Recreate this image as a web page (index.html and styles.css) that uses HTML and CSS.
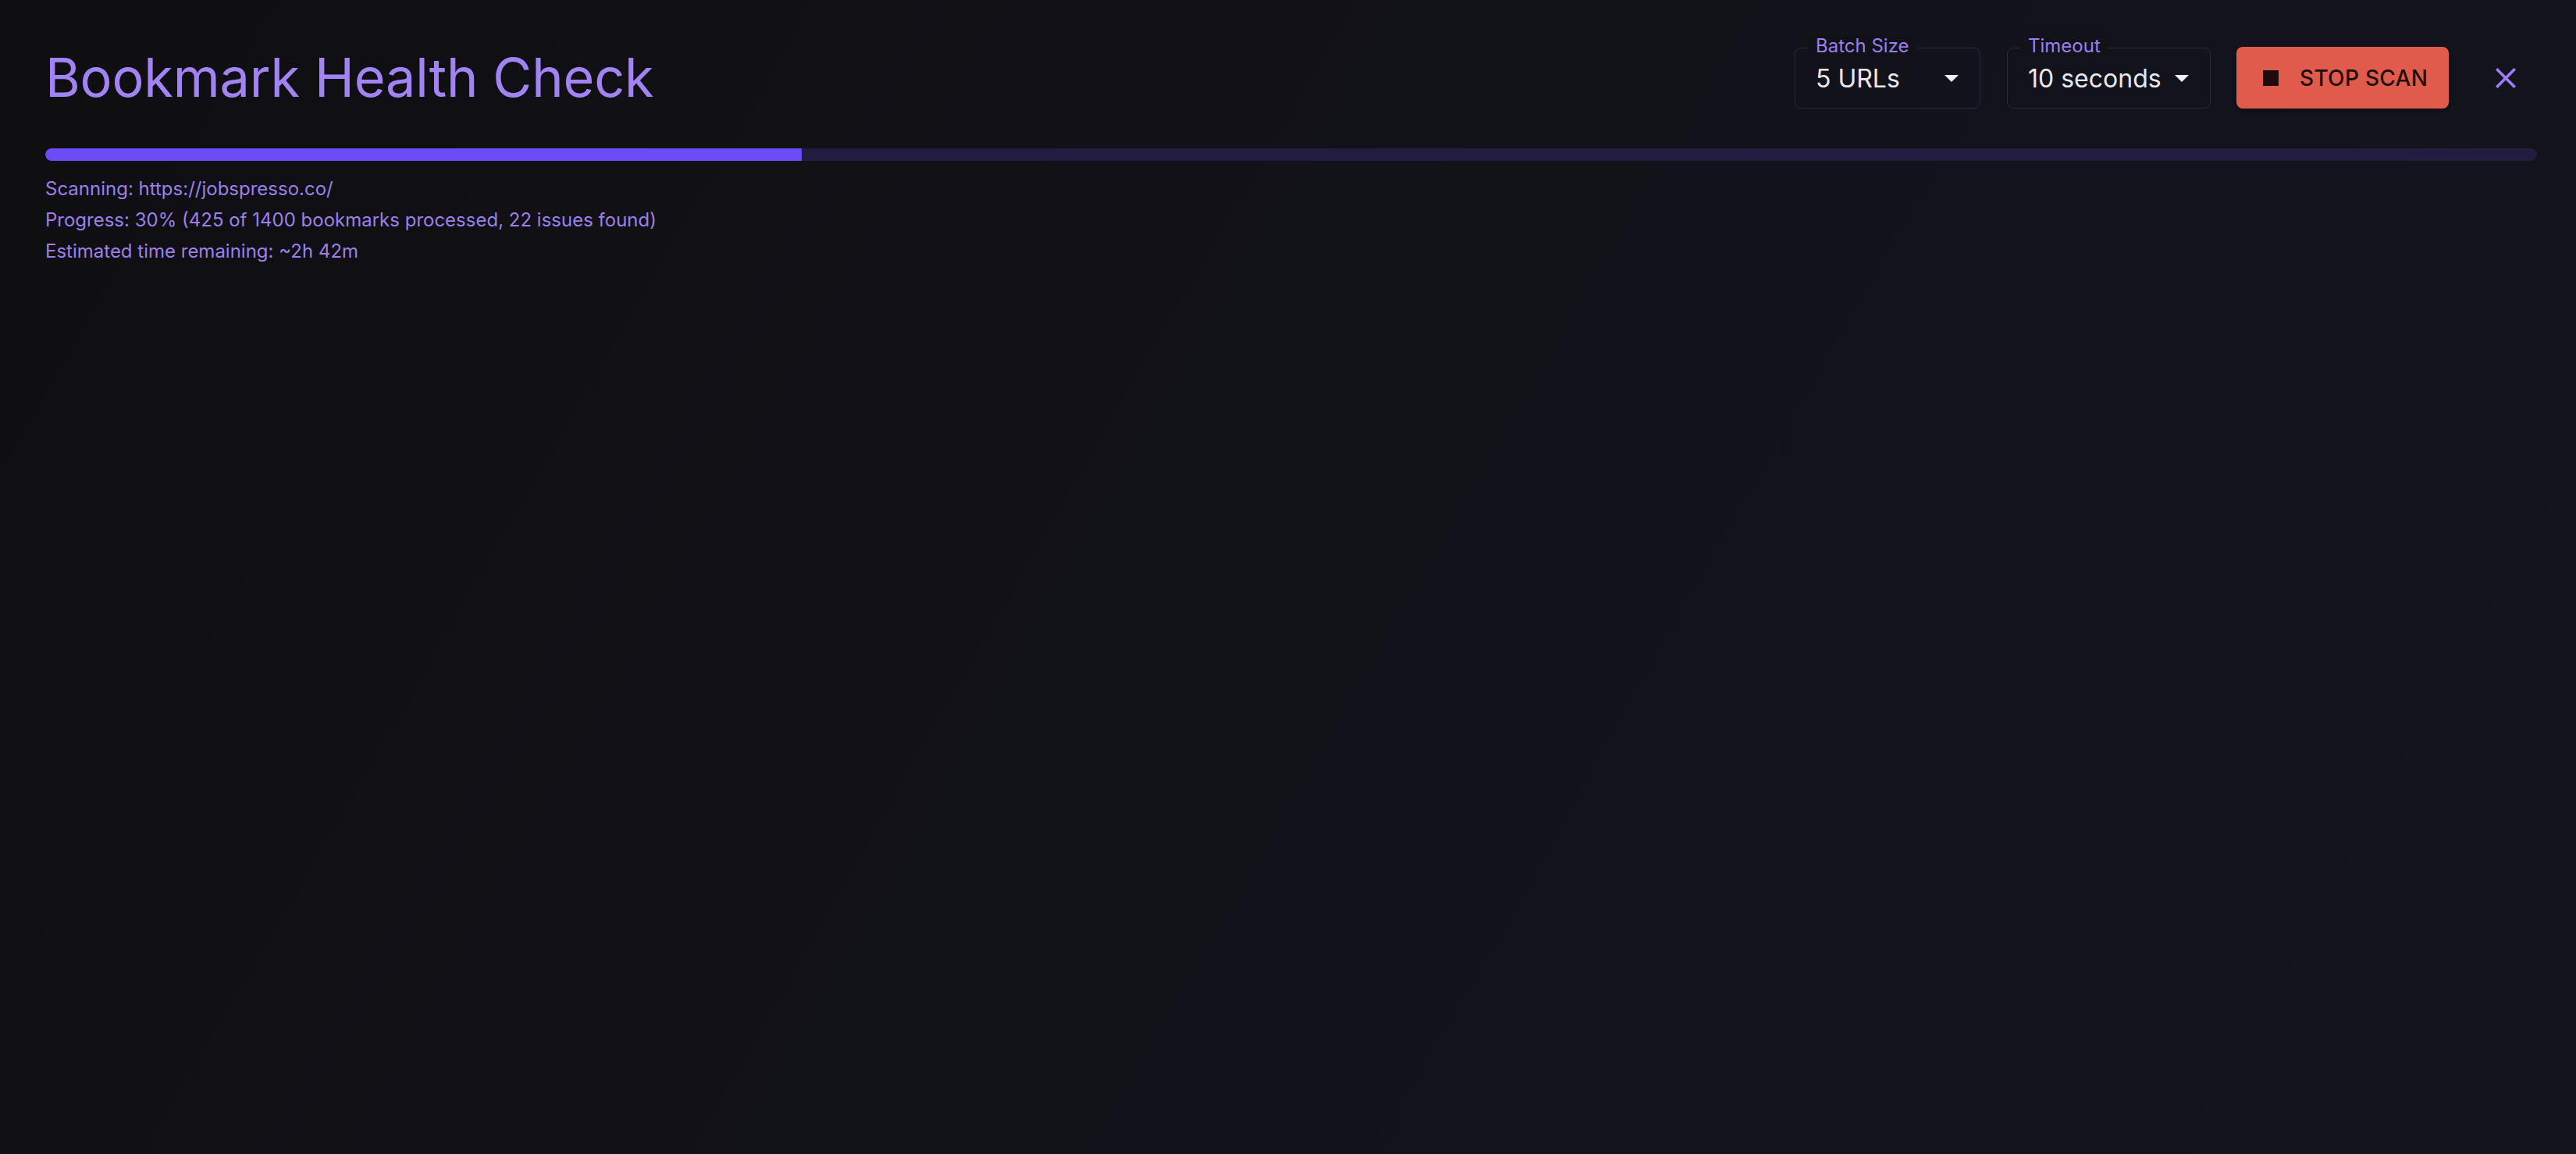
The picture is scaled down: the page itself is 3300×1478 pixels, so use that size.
FILE: index.html
```html
<!DOCTYPE html>
<html lang="en">
<head>
<meta charset="utf-8">
<title>Bookmark Health Check</title>
<link rel="stylesheet" href="styles.css">
</head>
<body>
<div class="page">
  <header class="header">
    <h1 class="title">Bookmark Health Check</h1>
    <div class="controls">
      <div class="field field-batch">
        <span class="field-label">Batch Size</span>
        <span class="field-value">5 URLs</span>
        <svg class="caret" viewBox="0 0 18 9" width="18" height="9"><path d="M0 0h18L9 9z" fill="#f2f0f7"/></svg>
      </div>
      <div class="field field-timeout">
        <span class="field-label">Timeout</span>
        <span class="field-value">10 seconds</span>
        <svg class="caret" viewBox="0 0 18 9" width="18" height="9"><path d="M0 0h18L9 9z" fill="#f2f0f7"/></svg>
      </div>
      <button class="stop-btn" type="button">
        <span class="stop-icon"></span>
        <span>STOP SCAN</span>
      </button>
      <button class="close-btn" type="button" aria-label="Close">
        <svg viewBox="5 5 14 14" width="26" height="26"><path d="M19 6.41 17.59 5 12 10.59 6.41 5 5 6.41 10.59 12 5 17.59 6.41 19 12 13.41 17.59 19 19 17.59 13.41 12z" fill="#9d7cf5"/></svg>
      </button>
    </div>
  </header>
  <div class="progress">
    <div class="progress-fill" style="width: 30.357%"></div>
  </div>
  <div class="status">
    <p class="status-line">Scanning: https://jobspresso.co/</p>
    <p class="status-line">Progress: 30% (425 of 1400 bookmarks processed, 22 issues found)</p>
    <p class="status-line">Estimated time remaining: ~2h 42m</p>
  </div>
</div>
</body>
</html>
```

FILE: styles.css
```css
* { box-sizing: border-box; }
html, body {
  margin: 0;
  padding: 0;
  height: 100%;
}
body {
  background: linear-gradient(120deg, #0f0f12 0%, #121219 50%, #14141f 100%);
  font-family: Inter, "Noto Sans", "Liberation Sans", sans-serif;
  color: #e8e6ee;
  min-height: 1478px;
}
.page {
  padding: 60px 50px 0 58px;
}
.header {
  display: flex;
  align-items: center;
  justify-content: space-between;
  height: 79px;
  margin-right: 14px;
}
.title {
  margin: 0;
  font-size: 68.5px;
  font-weight: 400;
  line-height: 76px;
  color: #a283f4;
  letter-spacing: -0.2px;
}
.controls {
  display: flex;
  align-items: center;
  height: 79px;
}
.field {
  position: relative;
  height: 78px;
  border: 1.5px solid #2c2842;
  border-radius: 8px;
  display: flex;
  align-items: center;
  justify-content: space-between;
  padding: 0 27px 0 26px;
}
.field-batch { width: 238px; }
.field-timeout { width: 261px; margin-left: 34px; }
.field-label {
  position: absolute;
  top: -16px;
  left: 16px;
  padding: 0 10px;
  font-size: 24px;
  line-height: 26px;
  color: #9b7ff0;
  background: #111118;
}
.field-timeout .field-label { background: #121219; }
.field-value {
  font-size: 32px;
  line-height: 40px;
  color: #e9e7ef;
  margin-top: 2px;
}
.caret { display: block; margin-top: 2px; }
.stop-btn {
  margin-left: 33px;
  height: 79px;
  width: 272px;
  border: none;
  border-radius: 8px;
  background: #e05b4c;
  color: #1f0c0a;
  font-family: inherit;
  font-size: 28px;
  font-weight: 500;
  letter-spacing: 0.3px;
  display: flex;
  align-items: center;
  padding: 0 0 0 34px;
  gap: 27px;
  box-shadow: 0 3px 4px rgba(0,0,0,0.3);
}
.stop-icon {
  width: 20px;
  height: 20px;
  background: #1e0c0a;
  display: block;
}
.close-btn {
  margin-left: 47px;
  width: 52px;
  height: 52px;
  border: none;
  background: transparent;
  display: flex;
  align-items: center;
  justify-content: center;
  padding: 0;
}
.progress {
  margin-top: 51px;
  height: 16px;
  border-radius: 8px;
  background: #221c40;
  overflow: hidden;
}
.progress-fill {
  height: 100%;
  background: #6b4cf6;
  border-radius: 8px 0 0 8px;
}
.status {
  margin-top: 16px;
}
.status-line {
  margin: 0;
  font-size: 24px;
  line-height: 40px;
  color: #9b80ea;
}
```
